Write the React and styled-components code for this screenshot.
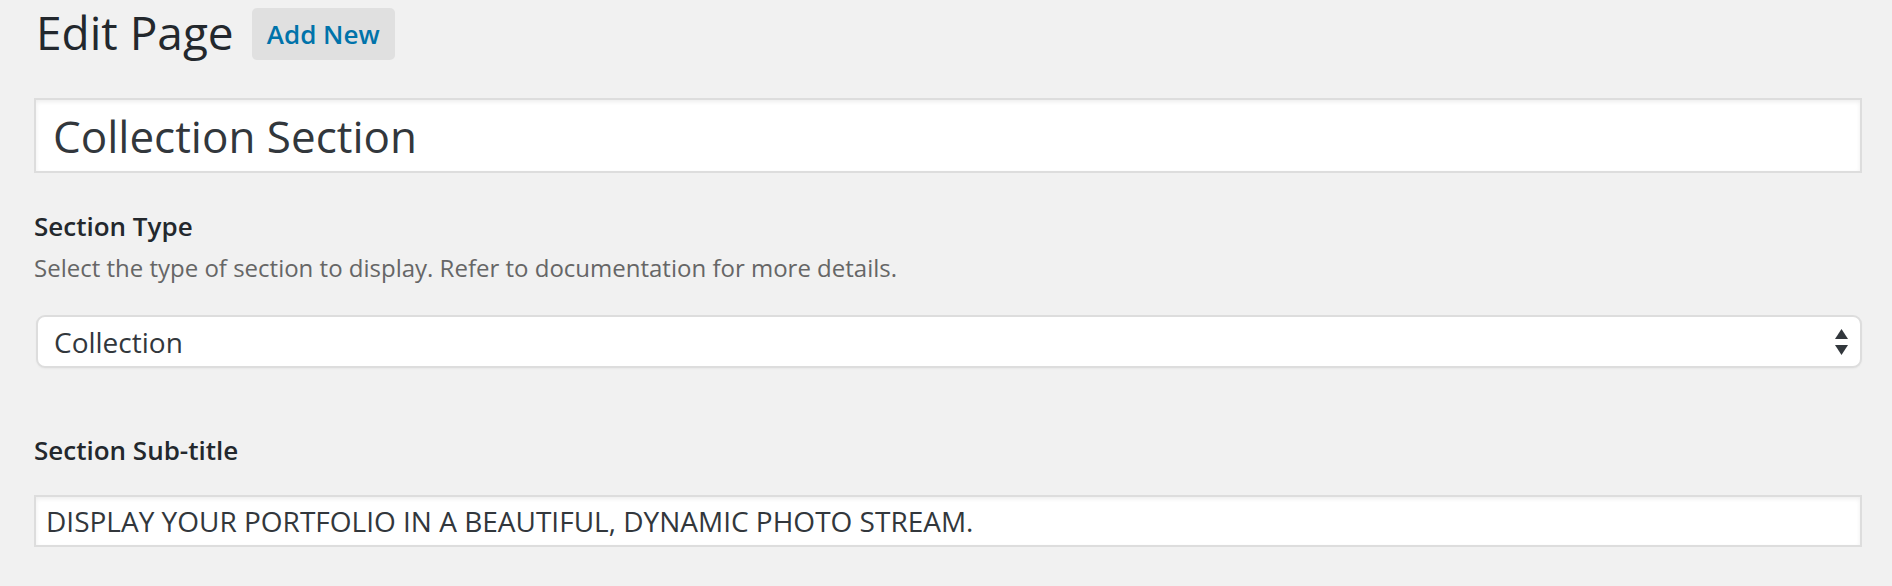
import React from "react";
import styled, { createGlobalStyle } from "styled-components";

const GlobalStyle = createGlobalStyle`
  html, body {
    margin: 0;
    padding: 0;
    background: #f1f1f1;
  }
  body {
    font-family: "Open Sans", "Noto Sans", sans-serif;
    color: #23282d;
  }
  * { box-sizing: border-box; }
`;

const Page = styled.div`
  padding: 8px 30px 0 34px;
  display: flex;
  flex-direction: column;
`;

const Header = styled.div`
  display: flex;
  align-items: center;
  gap: 18px;
  height: 52px;
  padding-left: 2px;
`;

const Heading = styled.h1`
  margin: 0;
  padding-bottom: 4px;
  font-size: 46px;
  font-weight: 400;
  line-height: 48px;
  color: #23282d;
`;

const AddNewButton = styled.a`
  display: flex;
  align-items: center;
  justify-content: center;
  width: 143px;
  height: 52px;
  background: #e0e0e0;
  border-radius: 5px;
  color: #0073aa;
  font-size: 26px;
  font-weight: 600;
  line-height: 1;
  text-decoration: none;
  cursor: pointer;
`;

const TextInput = styled.input`
  display: block;
  width: 100%;
  margin: ${(p) => p.$margin || "0"};
  height: ${(p) => p.$height}px;
  padding: 0 ${(p) => p.$padX}px;
  border: 2px solid #dddddd;
  background: #ffffff;
  box-shadow: inset 0 2px 4px rgba(0, 0, 0, 0.07);
  font-family: "Open Sans", "Noto Sans", sans-serif;
  font-size: ${(p) => p.$size}px;
  color: #32373c;
  outline: none;
`;

const FieldLabel = styled.label`
  display: block;
  margin: ${(p) => p.$margin};
  font-size: 26px;
  font-weight: 600;
  line-height: 36px;
  color: #23282d;
`;

const Description = styled.p`
  margin: 6px 0 0;
  font-size: 24px;
  line-height: 36px;
  color: #666666;
`;

const SelectBox = styled.div`
  margin: 29px 0 0 2px;
  height: 53px;
  display: flex;
  align-items: center;
  padding: 0 16px;
  background: #ffffff;
  border: 2px solid #dddddd;
  border-radius: 9px;
  box-shadow: 0 1px 2px rgba(0, 0, 0, 0.04);
  font-size: 28px;
  color: #32373c;
`;

const SelectValue = styled.span`
  flex: 1;
`;

const Arrows = styled.svg`
  flex: none;
  width: 13px;
  height: 26px;
  margin-right: -4px;
`;

export default function App() {
  return (
    <>
      <GlobalStyle />
      <Page>
        <Header>
          <Heading>Edit Page</Heading>
          <AddNewButton>Add New</AddNewButton>
        </Header>

        <TextInput
          $margin="38px 0 0"
          $height={75}
          $padX={17}
          $size={44}
          defaultValue="Collection Section"
        />

        <FieldLabel $margin="35px 0 0">Section Type</FieldLabel>
        <Description>
          Select the type of section to display. Refer to documentation for more
          details.
        </Description>

        <SelectBox>
          <SelectValue>Collection</SelectValue>
          <Arrows viewBox="0 0 13 26">
            <polygon points="6.5,0 13,10 0,10" fill="#32373c" />
            <polygon points="0,16 13,16 6.5,26" fill="#32373c" />
          </Arrows>
        </SelectBox>

        <FieldLabel $margin="64px 0 0">Section Sub-title</FieldLabel>

        <TextInput
          $margin="27px 0 0"
          $height={52}
          $padX={10}
          $size={28}
          defaultValue="DISPLAY YOUR PORTFOLIO IN A BEAUTIFUL, DYNAMIC PHOTO STREAM."
        />
      </Page>
    </>
  );
}
